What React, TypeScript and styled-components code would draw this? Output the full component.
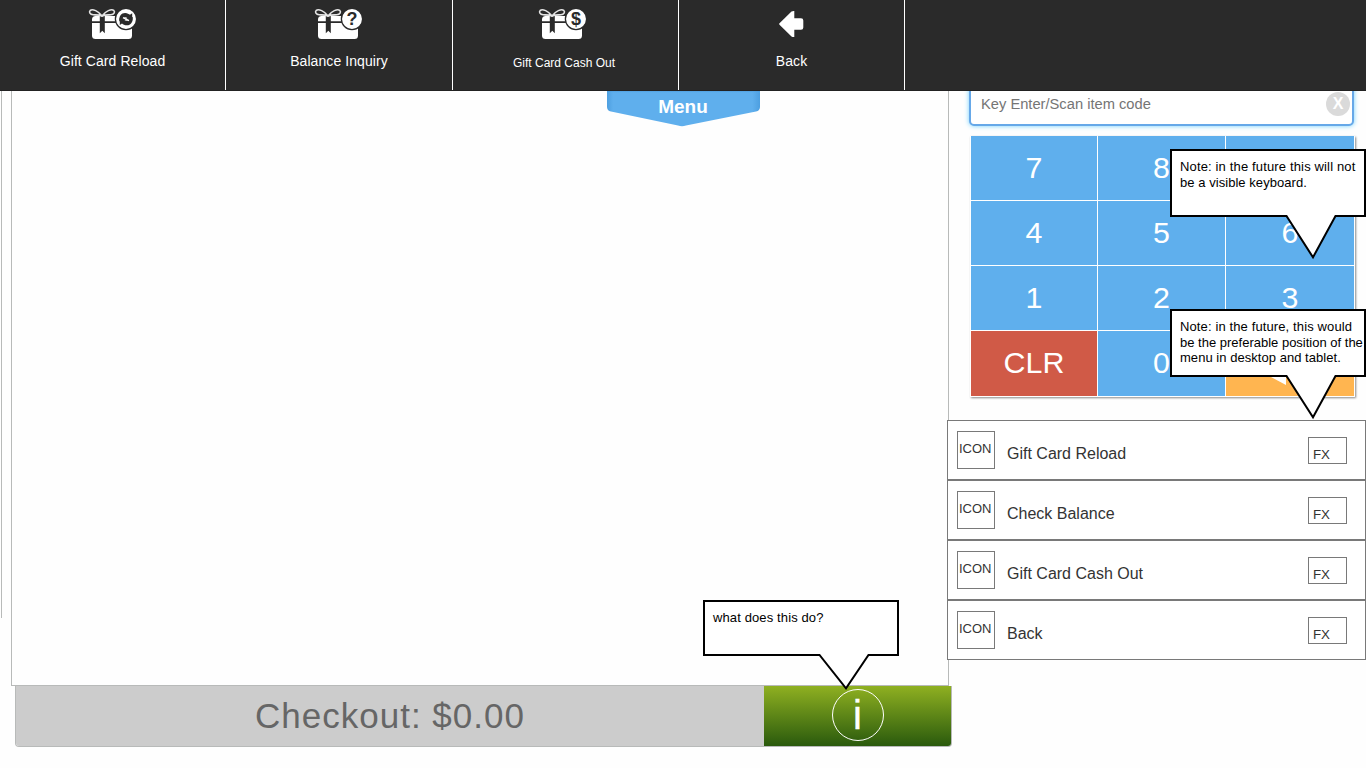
import React from 'react';
import styled, { createGlobalStyle } from 'styled-components';

const Global = createGlobalStyle`
  * { box-sizing: border-box; }
  body {
    margin: 0;
    background: #fefefe;
    font-family: "Liberation Sans", Arial, sans-serif;
    overflow: hidden;
  }
  button { font-family: inherit; border: 0; padding: 0; }
`;

const Page = styled.div`
  position: relative;
  width: 1366px;
  height: 768px;
  overflow: hidden;
`;

const TopBar = styled.nav`
  position: relative;
  z-index: 2;
  display: flex;
  height: 91px;
  padding-bottom: 1px;
  background: #2a2a2a;
  border-bottom: 1px solid #222;
`;

const TopItem = styled.button<{ $width: number }>`
  display: flex;
  flex-direction: column;
  align-items: center;
  width: ${(p) => p.$width}px;
  height: 90px;
  background: transparent;
  border-right: 1px solid #fff;
  color: #fff;
`;

const TopIcon = styled.span<{ $shift?: number }>`
  display: flex;
  height: 44px;
  padding-top: 8px;
  margin-left: ${(p) => p.$shift ?? 0}px;
`;

const TopLabel = styled.span<{ $small?: boolean }>`
  margin-top: ${(p) => (p.$small ? 11 : 9)}px;
  margin-right: ${(p) => (p.$small ? 3 : 0)}px;
  font-size: ${(p) => (p.$small ? 12 : 14)}px;
  letter-spacing: ${(p) => (p.$small ? 0 : 0.08)}px;
  line-height: 16px;
`;

const Workspace = styled.main`
  display: flex;
  align-items: flex-start;
`;

const Rail = styled.div`
  width: 10px;
  height: 527px;
  margin-left: 1px;
  border-left: 1px solid #b8bab9;
`;

const Register = styled.section`
  width: 938px;
`;

const Receipt = styled.div`
  height: 595px;
  border: 1px solid #b8bab9;
  border-top: 0;
`;

const MenuTab = styled.button`
  position: absolute;
  left: 607px;
  top: 91px;
  width: 153px;
  height: 36px;
  background: transparent;
  color: #fff;
  font-size: 19px;
  font-weight: bold;
  line-height: 30px;
  svg { position: absolute; left: 0; top: 0; }
  span { position: relative; display: block; margin: -5px 1px 0 0; }
`;

const CheckoutBar = styled.div`
  display: flex;
  width: 937px;
  height: 61px;
  margin-left: 4px;
  border: 1px solid #b8bab9;
  border-top: 0;
  border-radius: 0 0 4px 4px;
  overflow: hidden;
`;

const Total = styled.div`
  width: 748px;
  background: #ccc;
  color: #666;
  font-size: 35px;
  letter-spacing: 1px;
  line-height: 59px;
  text-align: center;
`;

const InfoButton = styled.button`
  display: flex;
  flex: 1;
  justify-content: center;
  padding-top: 3px;
  background: linear-gradient(#8fb021, #2a5a0d);
`;

const InfoRing = styled.span`
  width: 52px;
  height: 52px;
  border: 1px solid #fff;
  border-radius: 50%;
  color: #fff;
  font-size: 40px;
  line-height: 51px;
  text-align: center;
  -webkit-text-stroke: 0.4px #fff;
`;

const Side = styled.aside`
  display: flex;
  flex-direction: column;
  width: 419px;
  margin-left: -2px;
`;

const SearchBox = styled.div`
  display: flex;
  justify-content: space-between;
  align-items: flex-end;
  width: 385px;
  height: 44px;
  margin: -9px 0 0 22px;
  padding: 0 2px 8px 10px;
  border: 2px solid #66a8e8;
  border-radius: 5px;
  background: #fff;
  box-shadow: 0 0 5px #6fd0ff;
`;

const SearchHint = styled.span`
  color: #757575;
  font-size: 14.7px;
  line-height: 23px;
`;

const ClearButton = styled.button`
  width: 24px;
  height: 24px;
  border-radius: 50%;
  background: #dadada;
  color: #fff;
  font-size: 16px;
  font-weight: bold;
  line-height: 24px;
`;

const Keypad = styled.div`
  display: grid;
  grid-template-columns: 126px 127px 128px;
  grid-template-rows: 64px 64px 64px 65px;
  gap: 1px;
  width: 385px;
  margin: 10px 0 0 23px;
  padding: 0 1px 1px;
  background: #fff;
  box-shadow: 1px 1px 2px #888;
`;

const Key = styled.button<{ $tone?: string }>`
  display: flex;
  align-items: flex-start;
  justify-content: center;
  padding-top: 14px;
  background: ${(p) => p.$tone ?? '#5fafed'};
  color: #fff;
  font-size: 30.4px;
  line-height: 35px;
  overflow: hidden;
  svg { margin-top: -3px; }
`;

const ActionList = styled.ul`
  margin: 23px 0 0;
  padding: 0;
  list-style: none;
`;

const ActionRow = styled.li`
  display: flex;
  height: 60px;
  padding: 10px 18px 0 9px;
  border: 1px solid #797979;
  background: #fff;
  color: #333;
`;

const IconBox = styled.span`
  width: 38px;
  height: 38px;
  padding-left: 1px;
  border: 1px solid #797979;
  font-size: 13px;
  line-height: 34px;
  white-space: nowrap;
`;

const ActionName = styled.span`
  flex: 1;
  margin: 14px 0 0 12px;
  font-size: 16px;
  line-height: 18px;
`;

const FxBox = styled.span`
  width: 39px;
  height: 27px;
  margin-top: 6px;
  padding-left: 4px;
  border: 1px solid #797979;
  font-size: 13.3px;
  line-height: 33px;
`;

const Note = styled.div<{ $x: number; $y: number; $h: number }>`
  position: absolute;
  z-index: 3;
  left: ${(p) => p.$x}px;
  top: ${(p) => p.$y}px;
  width: 196px;
  height: ${(p) => p.$h}px;
  padding: 8px 0 0 8px;
  border: 2px solid #000;
  background: #fff;
  color: #000;
  font-size: 13px;
  line-height: 15.6px;
  white-space: nowrap;
`;

const NoteLine = styled.div<{ $tracking: number }>`
  letter-spacing: ${(p) => p.$tracking}px;
`;

const Tail = styled.svg`
  position: absolute;
  left: 110px;
  top: 100%;
  overflow: visible;
`;

function GiftIcon({ kind }: { kind: 'reload' | '?' | '$' }) {
  return (
    <svg width="50" height="34" viewBox="0 0 50 34">
      <rect x="4" y="8" width="40" height="23" rx="3.5" fill="#fff" />
      <path d="M4 14.2H44" stroke="#2a2a2a" strokeWidth="1.8" />
      <path d="M11.8 8H16.8V25.2L14.3 22.8L11.8 25.2Z" fill="#2a2a2a" />
      <g fill="#2a2a2a" stroke="#e4e4e4" strokeWidth="1.6">
        <path d="M13.8 7.8C10.5 3 4.5 .6 2.3 2.3C.6 4.2 2 6.6 5.2 6.8C8 7 10.5 6.8 13.8 7.8Z" />
        <path d="M14.2 7.8C17.5 3 23.5 .6 25.7 2.3C27.4 4.2 26 6.6 22.8 6.8C20 7 17.5 6.8 14.2 7.8Z" />
      </g>
      <circle cx="38" cy="11" r="10.6" fill="#fff" stroke="#2a2a2a" strokeWidth="1.3" />
      {kind === 'reload' ? (
        <g fill="#2a2a2a">
          <path d="M31.3 13.2C30.7 8.2 33.4 4.8 37.2 4.9C39.4 5 40.8 5.9 42 6.8L44.2 5.3V12.2H37.2L39.4 9.9C37.2 8.4 34.7 9.2 34.6 13.2Z" />
          <path d="M44.7 9C45.3 14 42.6 17.4 38.8 17.3C36.6 17.2 35.2 16.3 34 15.4L31.8 16.9V10H38.8L36.6 12.3C38.8 13.8 41.3 13 41.4 9Z" />
          <path d="M35 9.6L41 12.7" stroke="#fff" strokeWidth="1.4" />
        </g>
      ) : (
        <text x="38" y="17.2" textAnchor="middle" fontSize="18" fontWeight="bold" fill="#2a2a2a">
          {kind}
        </text>
      )}
    </svg>
  );
}

function BackIcon() {
  return (
    <svg width="26" height="32" viewBox="0 0 26 32">
      <path
        d="M.5 15.3L12.5 3.6Q13.5 2.9 15.3 3V10.2H22Q24.3 10.2 24.3 12.5V19.5Q24.3 21.8 22 21.8H15.3V29Q13.5 29.1 12.5 28.4L.5 16.7Q-.2 16 .5 15.3Z"
        fill="#fff"
      />
    </svg>
  );
}

type Line = [text: string, tracking: number];

function Callout({ x, y, h, tipY, lines }: { x: number; y: number; h: number; tipY: number; lines: Line[] }) {
  return (
    <Note $x={x} $y={y} $h={h}>
      {lines.map(([text, tracking]) => (
        <NoteLine key={text} $tracking={tracking}>{text}</NoteLine>
      ))}
      <Tail width="60" height="46">
        <path d={`M4.5 0L31 ${tipY}L53.5 0Z`} fill="#fff" />
        <path d={`M3 1H4.5L31 ${tipY}L53.5 1H55`} fill="none" stroke="#000" strokeWidth="2" />
      </Tail>
    </Note>
  );
}

const actions = ['Gift Card Reload', 'Check Balance', 'Gift Card Cash Out', 'Back'];
const digits = ['7', '8', '', '4', '5', '6', '1', '2', '3'];

export default function App() {
  return (
    <Page>
      <Global />
      <TopBar>
        <TopItem $width={226}>
          <TopIcon><GiftIcon kind="reload" /></TopIcon>
          <TopLabel>Gift Card Reload</TopLabel>
        </TopItem>
        <TopItem $width={227}>
          <TopIcon><GiftIcon kind="?" /></TopIcon>
          <TopLabel>Balance Inquiry</TopLabel>
        </TopItem>
        <TopItem $width={226}>
          <TopIcon $shift={-5}><GiftIcon kind="$" /></TopIcon>
          <TopLabel $small>Gift Card Cash Out</TopLabel>
        </TopItem>
        <TopItem $width={226}>
          <TopIcon><BackIcon /></TopIcon>
          <TopLabel>Back</TopLabel>
        </TopItem>
      </TopBar>
      <Workspace>
        <Rail />
        <Register>
          <Receipt />
          <CheckoutBar>
            <Total>Checkout: $0.00</Total>
            <InfoButton><InfoRing>i</InfoRing></InfoButton>
          </CheckoutBar>
        </Register>
        <Side>
          <SearchBox>
            <SearchHint>Key Enter/Scan item code</SearchHint>
            <ClearButton>X</ClearButton>
          </SearchBox>
          <Keypad>
            {digits.map((d, i) => <Key key={i}>{d}</Key>)}
            <Key $tone="#d05a47">CLR</Key>
            <Key>0</Key>
            <Key $tone="#ffb550">
              <svg width="88" height="44" viewBox="0 0 88 44">
                <path d="M0 22L40 1V15H84V29H40V43Z" fill="#fff" />
              </svg>
            </Key>
          </Keypad>
          <ActionList>
            {actions.map((name) => (
              <ActionRow key={name}>
                <IconBox>ICON</IconBox>
                <ActionName>{name}</ActionName>
                <FxBox>FX</FxBox>
              </ActionRow>
            ))}
          </ActionList>
        </Side>
      </Workspace>
      <MenuTab>
        <svg width="153" height="36" viewBox="0 0 153 36">
          <defs>
            <linearGradient id="tabEdge">
              <stop offset="0" stopColor="#4d9fe0" />
              <stop offset=".04" stopColor="#5fafed" />
              <stop offset=".95" stopColor="#5fafed" />
              <stop offset="1" stopColor="#4d9fe0" />
            </linearGradient>
            <linearGradient id="tabTop" x2="0" y2="1">
              <stop offset="0" stopColor="#4595d8" stopOpacity=".7" />
              <stop offset=".13" stopColor="#5fafed" stopOpacity="0" />
            </linearGradient>
          </defs>
          <path d="M0 0H153V16Q153 19.5 149 20.6L79 34.5Q75 35.8 71 34.5L4 20.6Q0 19.5 0 16Z" fill="url(#tabEdge)" />
          <path d="M0 0H153V16H0Z" fill="url(#tabTop)" />
        </svg>
        <span>Menu</span>
      </MenuTab>
      <Callout
        x={1170}
        y={149}
        h={68}
        tipY={42.3}
        lines={[['Note: in the future this will not', 0.15], ['be a visible keyboard.', 0.05]]}
      />
      <Callout
        x={1170}
        y={309}
        h={68}
        tipY={42.3}
        lines={[
          ['Note: in the future, this would', 0.12],
          ['be the preferable position of the', 0],
          ['menu in desktop and tablet.', 0.04],
        ]}
      />
      <Callout x={703} y={600} h={56} tipY={34.3} lines={[['what does this do?', 0.12]]} />
    </Page>
  );
}
